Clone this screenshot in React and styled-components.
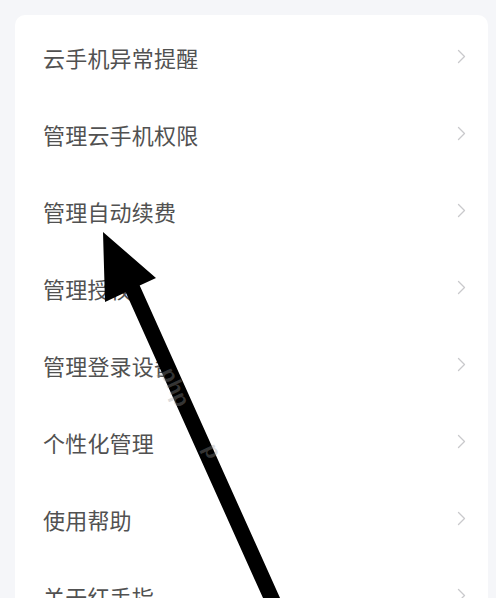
import React from "react";
import styled, { createGlobalStyle } from "styled-components";

const Global = createGlobalStyle`
  html, body { margin: 0; padding: 0; background: #f5f6f9; }
  #root { width: 496px; height: 598px; overflow: hidden; position: relative; }
`;

const Page = styled.div`
  width: 496px;
  height: 598px;
  box-sizing: border-box;
  padding: 15px 8px 0 15px;
  background: #f5f6f9;
  font-family: "Noto Sans CJK SC", "Noto Sans", sans-serif;
`;

const Card = styled.div`
  background: #ffffff;
  border-radius: 10px 10px 0 0;
  padding-top: 3px;
  display: flex;
  flex-direction: column;
`;

const Row = styled.div`
  height: 77px;
  flex-shrink: 0;
  display: flex;
  align-items: center;
  justify-content: space-between;
  padding: 0 22px 0 28px;
`;

const Label = styled.span`
  font-size: 22px;
  color: #515151;
  letter-spacing: 0.2px;
`;

const Chevron = styled.svg`
  width: 9px;
  height: 15px;
  display: block;
`;

const Overlay = styled.svg`
  position: absolute;
  left: 0;
  top: 0;
  width: 496px;
  height: 598px;
  pointer-events: none;
`;

const items = [
  "云手机异常提醒",
  "管理云手机权限",
  "管理自动续费",
  "管理授权",
  "管理登录设备",
  "个性化管理",
  "使用帮助",
  "关于红手指",
];

export default function App() {
  return (
    <>
      <Global />
      <Page>
        <Card>
          {items.map((t) => (
            <Row key={t}>
              <Label>{t}</Label>
              <Chevron viewBox="0 0 9 15">
                <polyline points="1.5,1.5 7.5,7.5 1.5,13.5" fill="none" stroke="#c9c9cc" strokeWidth="1.3" strokeLinecap="round" strokeLinejoin="round" />
              </Chevron>
            </Row>
          ))}
        </Card>
      </Page>
      <Overlay viewBox="0 0 496 598">
        <polygon
          points="103,232 156,278 139.7,285.6 289.9,620 272.9,620 125.7,292.3 105,302"
          fill="#000"
        />
        <text x="0" y="0" transform="translate(160,372) rotate(65)" fill="#9a9a9a" fillOpacity="0.35" fontSize="22" fontFamily="Liberation Sans, sans-serif" fontWeight="bold">php</text>
        <text x="0" y="0" transform="translate(203,448) rotate(65)" fill="#9a9a9a" fillOpacity="0.35" fontSize="22" fontFamily="Liberation Sans, sans-serif" fontWeight="bold">p</text>
      </Overlay>
    </>
  );
}
